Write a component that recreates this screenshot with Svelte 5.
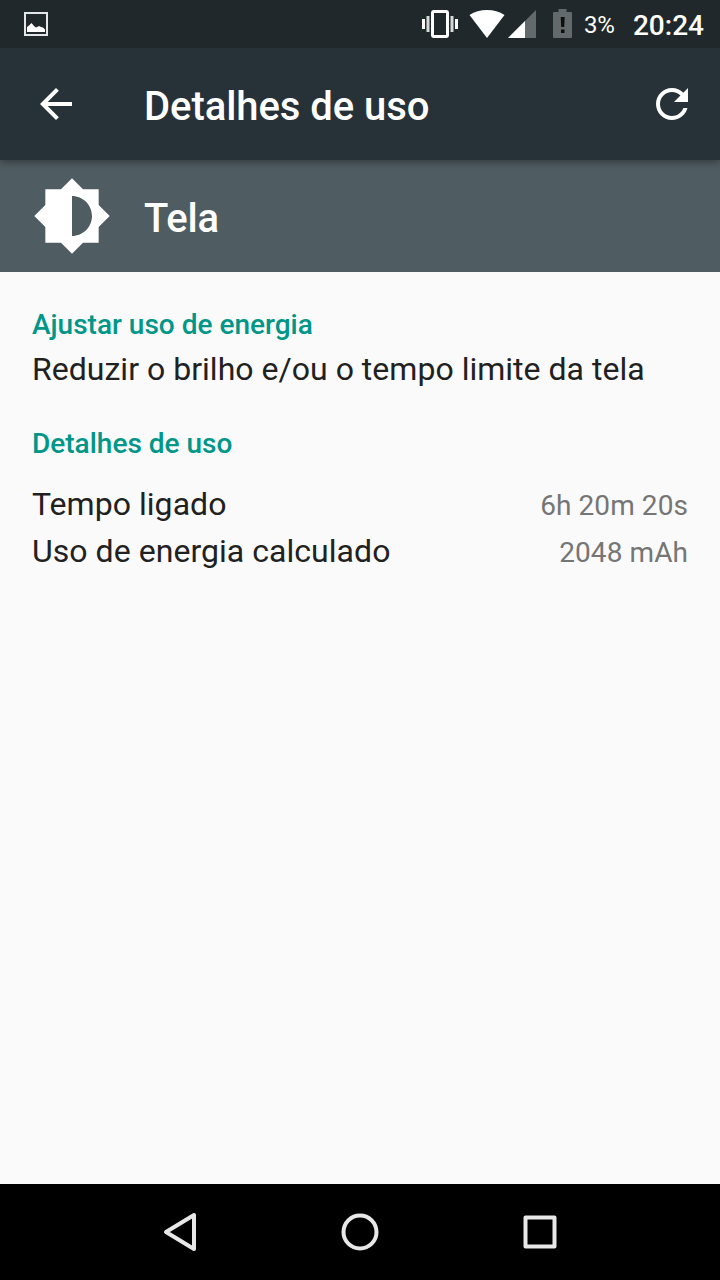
<script lang="ts">
  interface UsageRow {
    label: string;
    value: string;
  }

  const battery = '3%';
  const clock = '20:24';

  const details: UsageRow[] = [
    { label: 'Tempo ligado', value: '6h 20m 20s' },
    { label: 'Uso de energia calculado', value: '2048 mAh' }
  ];
</script>

<div class="screen">
  <header class="status-bar">
    <svg class="picture" width="24" height="24" viewBox="0 0 24 24">
      <rect x="1" y="1" width="22" height="22" fill="none" stroke="#e4e6e7" stroke-width="2" />
      <path d="M3 20v-5l2-1.500L7.500 11l2.500 3 2 1.500 3-1.500 2 1 2 .5 2 2V20z" fill="#fff" />
    </svg>

    <div class="indicators">
      <svg class="vibrate" width="36" height="28" viewBox="0 0 36 28">
        <rect x="10.500" y="1.500" width="15" height="25" rx="1.500" fill="none" stroke="#fff" stroke-width="3" />
        <path d="M0 9h3v10H0zM33 9h3v10h-3z" fill="#fff" />
        <path d="M4.500 6h3v16h-3zM28.500 6h3v16h-3z" fill="#d5d8d9" />
      </svg>
      <svg class="wifi" width="36" height="28" viewBox="0 0 36 28">
        <path d="M18 28L.5 5C5.500 1.500 11.500 0 18 0s12.500 1.500 17.500 5z" fill="#fff" />
      </svg>
      <svg class="signal" width="28" height="28" viewBox="0 0 28 28">
        <path d="M0 28L28 0v28z" fill="#64696b" />
        <path d="M0 28l17-17v17z" fill="#fff" />
      </svg>
      <svg class="battery" width="19" height="29" viewBox="0 0 19 29">
        <path d="M5.500 0h8v3H18a1 1 0 0 1 1 1v24a1 1 0 0 1-1 1H1a1 1 0 0 1-1-1V4a1 1 0 0 1 1-1h4.500z" fill="#64696b" />
        <path d="M7.700 8h4l-.5 10h-3zM8 20.500h3.500V24H8z" fill="#0c0f10" />
      </svg>
      <span class="level">{battery}</span>
      <span class="clock">{clock}</span>
    </div>
  </header>

  <div class="toolbar">
    <svg width="48" height="48" viewBox="0 0 24 24" fill="#fff">
      <path d="M20 11H7.830l5.590-5.590L12 4l-8 8 8 8 1.410-1.410L7.830 13H20v-2z" />
    </svg>
    <h1>Detalhes de uso</h1>
    <svg width="48" height="48" viewBox="0 0 24 24" fill="#fff">
      <path d="M17.650 6.350C16.200 4.900 14.210 4 12 4c-4.420 0-7.990 3.580-7.990 8s3.570 8 7.990 8c3.730 0 6.840-2.550 7.730-6h-2.080c-.82 2.330-3.040 4-5.650 4-3.310 0-6-2.690-6-6s2.690-6 6-6c1.660 0 3.140.69 4.220 1.780L13 11h7V4l-2.350 2.350z" />
    </svg>
  </div>

  <div class="subject">
    <svg width="80" height="80" viewBox="0 0 24 24" fill="#fff">
      <path d="M20 15.310L23.310 12 20 8.690V4h-4.690L12 .69 8.690 4H4v4.690L.69 12 4 15.310V20h4.690L12 23.310 15.310 20H20v-4.690zM12 18V6c3.310 0 6 2.690 6 6s-2.690 6-6 6z" />
    </svg>
    <h2>Tela</h2>
  </div>

  <main>
    <section>
      <h3>Ajustar uso de energia</h3>
      <p>Reduzir o brilho e/ou o tempo limite da tela</p>
    </section>

    <section class="details">
      <h3>Detalhes de uso</h3>
      {#each details as row}
        <div class="row">
          <span>{row.label}</span>
          <span class="value">{row.value}</span>
        </div>
      {/each}
    </section>
  </main>

  <nav>
    <svg width="40" height="40" viewBox="0 0 40 40">
      <path d="M34 3v34L6 20z" />
    </svg>
    <svg width="40" height="40" viewBox="0 0 40 40">
      <circle cx="20" cy="20" r="16.500" />
    </svg>
    <svg width="40" height="40" viewBox="0 0 40 40">
      <rect x="5.500" y="5.500" width="29" height="29" />
    </svg>
  </nav>
</div>

<style>
  :global(body) {
    margin: 0;
  }

  .screen {
    display: flex;
    flex-direction: column;
    width: 720px;
    height: 1280px;
    background: #fafafa;
    color: #212121;
    font-family: Roboto, sans-serif;
    overflow: hidden;
  }

  svg {
    display: block;
    flex: none;
  }

  h1,
  h2,
  h3,
  p {
    margin: 0;
    font-weight: 500;
  }

  .status-bar {
    display: flex;
    align-items: center;
    justify-content: space-between;
    height: 48px;
    padding: 0 16px 0 24px;
    background: #20282b;
    color: #fff;
    /* keeps the toolbar shadow below the bar */
    z-index: 2;
  }

  .indicators {
    display: flex;
    align-items: center;
    height: 48px;
  }

  .wifi {
    margin-left: 11px;
  }

  .signal {
    margin-left: 3px;
  }

  .battery {
    margin: 0 12px 1px 17px;
  }

  .level {
    font-size: 24px;
    line-height: 48px;
    padding-top: 2px;
  }

  .clock {
    margin-left: 18px;
    font-size: 28px;
    font-weight: 500;
    line-height: 48px;
    padding-top: 4px;
  }

  .toolbar {
    display: flex;
    align-items: center;
    height: 112px;
    padding: 0 24px 0 32px;
    box-sizing: border-box;
    background: #263238;
    box-shadow: 0 2px 8px rgba(0, 0, 0, 0.4);
    z-index: 1;
  }

  .toolbar h1 {
    flex: 1;
    margin-left: 64px;
    padding-top: 6px;
    color: #fff;
    font-size: 40px;
    letter-spacing: -0.06px;
    line-height: 48px;
  }

  .subject {
    display: flex;
    align-items: center;
    gap: 32px;
    height: 112px;
    padding: 0 32px;
    background: #4f5d62;
  }

  .subject h2 {
    padding-top: 6px;
    color: #fff;
    font-size: 40px;
    letter-spacing: -0.2px;
    line-height: 48px;
  }

  main {
    flex: 1;
    padding: 36px 32px 0;
  }

  h3 {
    color: #009688;
    font-size: 28px;
    line-height: 33px;
  }

  p {
    font-size: 32px;
    font-weight: 400;
    letter-spacing: 0.02px;
    line-height: 38px;
    padding-top: 9px;
    white-space: nowrap;
  }

  .details {
    margin-top: 39px;
  }

  .row {
    display: flex;
    align-items: baseline;
    justify-content: space-between;
    height: 47px;
    font-size: 32px;
    letter-spacing: 0.04px;
    line-height: 47px;
  }

  .details h3 {
    margin-bottom: 21px;
  }

  .value {
    color: #757575;
    font-size: 28px;
    letter-spacing: 0.08px;
  }

  nav {
    display: flex;
    align-items: center;
    justify-content: center;
    gap: 140px;
    height: 96px;
    background: #000;
  }

  nav svg {
    fill: none;
    stroke: #e8e8e8;
    stroke-width: 4;
    stroke-linejoin: round;
  }
</style>
